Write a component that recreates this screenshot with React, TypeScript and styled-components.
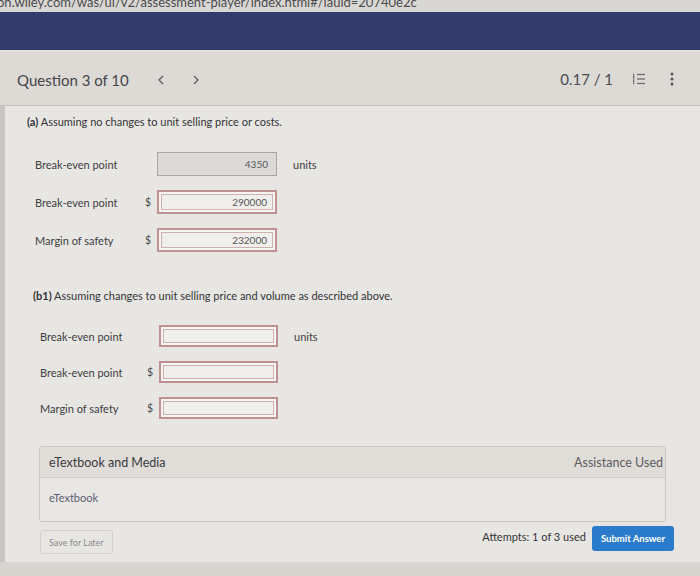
import React from "react";
import styled, { createGlobalStyle } from "styled-components";

const Global = createGlobalStyle`
  html, body { margin: 0; padding: 0; background: #d6d3ce; }
  body { font-family: Lato, "Open Sans", "Liberation Sans", sans-serif; }
  * { box-sizing: border-box; }
`;

const Page = styled.div`
  width: 700px;
  height: 576px;
  overflow: hidden;
  display: flex;
  flex-direction: column;
  background: #d6d3ce;
`;

const UrlBar = styled.div`
  height: 12px;
  overflow: hidden;
  background: #d9d7d3;
  color: #4b4b4e;
  font-size: 13px;
  line-height: 13px;
  white-space: nowrap;
  span { display: block; margin-top: -4px; margin-left: -3px; }
`;

const NavBar = styled.div`
  height: 40px;
  background: #323b69;
  border-bottom: 2px solid #e4e2de;
`;

const Header = styled.div`
  height: 54px;
  display: flex;
  align-items: center;
  padding: 0 26px 0 17px;
  background: #dddad5;
  border-bottom: 1px solid #c6c3be;
  color: #45454a;
`;

const Title = styled.div`
  font-size: 15px;
  margin-top: 2px;
`;

const Chevron = styled.span<{ $ml: number }>`
  margin-left: ${(p) => p.$ml}px;
  display: inline-flex;
  margin-top: 2px;
`;

const Spacer = styled.div`
  flex: 1;
`;

const Score = styled.div`
  font-size: 15px;
  color: #4a4a4f;
`;

const IconBox = styled.span<{ $ml: number }>`
  margin-left: ${(p) => p.$ml}px;
  display: inline-flex;
  align-items: center;
`;

const Main = styled.div`
  flex: 1;
  display: flex;
  flex-direction: column;
  background: #e8e6e2;
  border-left: 5px solid #c9c6c1;
  padding: 8px 36px 0 0;
  color: #3a3a3e;
`;

const Heading = styled.div<{ $indent: number; $mt: number }>`
  margin-left: ${(p) => p.$indent}px;
  margin-top: ${(p) => p.$mt}px;
  font-size: 11px;
  line-height: 16px;
  color: #333338;
  b { font-weight: 700; }
`;

const Rows = styled.div<{ $indent: number; $mt: number; $gap: number }>`
  margin-left: ${(p) => p.$indent}px;
  margin-top: ${(p) => p.$mt}px;
  display: flex;
  flex-direction: column;
  gap: ${(p) => p.$gap}px;
`;

const Row = styled.div<{ $h: number; $label: number; $field: number }>`
  display: grid;
  grid-template-columns: ${(p) => p.$label}px 12px ${(p) => p.$field}px auto;
  align-items: center;
  height: ${(p) => p.$h}px;
  font-size: 11px;
  color: #3d3d42;
`;

const Dollar = styled.span`
  font-size: 10.5px;
  color: #4a4a50;
`;

const Field = styled.div<{ $disabled?: boolean }>`
  height: 100%;
  display: flex;
  align-items: center;
  justify-content: flex-end;
  padding-right: 8px;
  font-size: 10px;
  color: #55555a;
  background: ${(p) => (p.$disabled ? "#dcdad6" : "#f1efeb")};
  border: ${(p) => (p.$disabled ? "1px solid #a9a7a3" : "2px solid #bf9191")};
  box-shadow: ${(p) => (p.$disabled ? "none" : "inset 0 0 0 2px #f7f5f2, inset 0 0 0 3px #cfb0ae")};
`;

const Units = styled.span`
  margin-left: 16px;
  font-size: 11px;
  color: #3d3d42;
`;

const Panel = styled.div`
  margin: 27px -2px 0 34px;
  border: 1px solid #cbc8c3;
  border-radius: 3px;
  overflow: hidden;
`;

const PanelHead = styled.div`
  height: 31px;
  display: flex;
  align-items: center;
  justify-content: space-between;
  padding: 0 2px 0 9px;
  background: #e0ddd8;
  border-bottom: 1px solid #d2cfca;
  font-size: 12.5px;
  color: #3a3a3f;
`;

const Muted = styled.span`
  color: #5c5c61;
  font-size: 12.5px;
`;

const PanelBody = styled.div`
  height: 43px;
  padding: 13px 9px 0;
  background: #e9e7e3;
  font-size: 11px;
  color: #5a5e73;
`;

const Footer = styled.div`
  display: flex;
  align-items: flex-start;
  margin: 4px -10px 0 35px;
`;

const SaveButton = styled.button`
  margin-top: 4px;
  height: 24px;
  padding: 0 8px;
  background: #e8e6e2;
  border: 1px solid #d3d0cb;
  border-radius: 3px;
  font-family: inherit;
  font-size: 9px;
  color: #8a8a8e;
`;

const Attempts = styled.span`
  margin-top: 4px;
  font-size: 11px;
  color: #333338;
  margin-right: 6px;
`;

const SubmitButton = styled.button`
  height: 25px;
  padding: 0 9px;
  background: #2b7bcd;
  border: none;
  border-radius: 3px;
  font-family: inherit;
  font-weight: 700;
  font-size: 9.5px;
  color: #ffffff;
`;

const Bottom = styled.div`
  height: 14px;
  margin-top: auto;
  background: #d8d5d0;
  margin-left: -5px;
  margin-right: -36px;
`;

const ChevronIcon = ({ dir }: { dir: "left" | "right" }) => (
  <svg width="8" height="10" viewBox="0 0 8 10" fill="none" stroke="#55555c" strokeWidth="1.2">
    {dir === "left" ? <polyline points="6,1 2,5 6,9" /> : <polyline points="2,1 6,5 2,9" />}
  </svg>
);

const ListIcon = () => (
  <svg width="14" height="12" viewBox="0 0 14 12" fill="none" stroke="#6a6a72" strokeWidth="1.3">
    <line x1="1" y1="1.5" x2="2.3" y2="1.5" />
    <line x1="1" y1="6" x2="2.3" y2="6" />
    <line x1="1" y1="10.5" x2="2.3" y2="10.5" />
    <line x1="1.6" y1="2.5" x2="1.6" y2="5" />
    <line x1="1.6" y1="7" x2="1.6" y2="9.5" />
    <line x1="5" y1="1.5" x2="13" y2="1.5" />
    <line x1="5" y1="6" x2="13" y2="6" />
    <line x1="5" y1="10.5" x2="13" y2="10.5" />
  </svg>
);

const Kebab = () => (
  <svg width="4" height="14" viewBox="0 0 4 14" fill="#55555c">
    <circle cx="2" cy="2" r="1.5" />
    <circle cx="2" cy="7" r="1.5" />
    <circle cx="2" cy="12" r="1.5" />
  </svg>
);

type RowData = { label: string; dollar?: boolean; value?: string; disabled?: boolean; units?: boolean };

const partA: RowData[] = [
  { label: "Break-even point", value: "4350", disabled: true, units: true },
  { label: "Break-even point", dollar: true, value: "290000" },
  { label: "Margin of safety", dollar: true, value: "232000" },
];

const partB: RowData[] = [
  { label: "Break-even point", units: true },
  { label: "Break-even point", dollar: true },
  { label: "Margin of safety", dollar: true },
];

const AnswerRows = ({ rows, h, label, field }: { rows: RowData[]; h: number; label: number; field: number }) => (
  <>
    {rows.map((r, i) => (
      <Row key={i} $h={h} $label={label} $field={field}>
        <span>{r.label}</span>
        <Dollar>{r.dollar ? "$" : ""}</Dollar>
        <Field $disabled={r.disabled}>{r.value ?? ""}</Field>
        {r.units ? <Units>units</Units> : <span />}
      </Row>
    ))}
  </>
);

export default function App() {
  return (
    <Page>
      <Global />
      <UrlBar>
        <span>on.wiley.com/was/ui/v2/assessment-player/index.html#/lauid=20740e2c</span>
      </UrlBar>
      <NavBar />
      <Header>
        <Title>Question 3 of 10</Title>
        <Chevron $ml={28}>
          <ChevronIcon dir="left" />
        </Chevron>
        <Chevron $ml={27}>
          <ChevronIcon dir="right" />
        </Chevron>
        <Spacer />
        <Score>0.17 / 1</Score>
        <IconBox $ml={19}>
          <ListIcon />
        </IconBox>
        <IconBox $ml={24}>
          <Kebab />
        </IconBox>
      </Header>
      <Main>
        <Heading $indent={22} $mt={0}>
          <b>(a)</b> Assuming no changes to unit selling price or costs.
        </Heading>
        <Rows $indent={30} $mt={22} $gap={14}>
          <AnswerRows rows={partA} h={24} label={110} field={120} />
        </Rows>
        <Heading $indent={28} $mt={36}>
          <b>(b1)</b> Assuming changes to unit selling price and volume as described above.
        </Heading>
        <Rows $indent={35} $mt={21} $gap={14}>
          <AnswerRows rows={partB} h={22} label={107} field={119} />
        </Rows>
        <Panel>
          <PanelHead>
            <span>eTextbook and Media</span>
            <Muted>Assistance Used</Muted>
          </PanelHead>
          <PanelBody>eTextbook</PanelBody>
        </Panel>
        <Footer>
          <SaveButton>Save for Later</SaveButton>
          <Spacer />
          <Attempts>Attempts: 1 of 3 used</Attempts>
          <SubmitButton>Submit Answer</SubmitButton>
        </Footer>
        <Bottom />
      </Main>
    </Page>
  );
}
